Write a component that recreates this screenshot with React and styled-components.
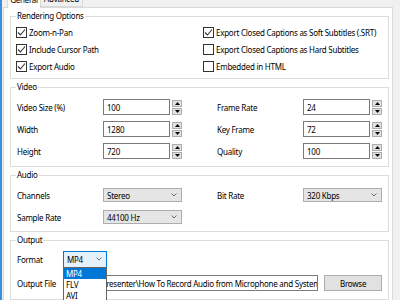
import styled, { createGlobalStyle } from "styled-components";

const GlobalStyle = createGlobalStyle`
  html, body {
    margin: 0;
    padding: 0;
    background: #f0f0f0;
  }
  body {
    font-family: "Noto Sans", "Open Sans", sans-serif;
    font-size: 8px;
    letter-spacing: -0.25px;
    color: #000000;
  }
  * { box-sizing: border-box; }
`;

const Window = styled.div`
  width: 400px;
  height: 300px;
  overflow: hidden;
  border-left: 2px solid #3d8fdc;
  background: #f0f0f0;
  display: flex;
  flex-direction: column;
  padding: 0 7px 0 1px;
`;

const Tabs = styled.div`
  display: flex;
  height: 20px;
  margin-top: -13px;
  padding-left: 4px;
`;

const Tab = styled.div`
  position: relative;
  z-index: 1;
  display: flex;
  justify-content: center;
  padding-top: 2px;
  align-items: center;
  width: ${(p) => p.$w}px;
  height: ${(p) => (p.$active ? 21 : 20)}px;
  background: ${(p) => (p.$active ? "#ffffff" : "#f0f0f0")};
  border: 1px solid #d9d9d9;
  border-bottom: ${(p) => (p.$active ? "none" : "1px solid #d9d9d9")};
  margin-left: ${(p) => (p.$active ? 0 : -1)}px;
`;

const Panel = styled.div`
  flex: 1;
  background: #ffffff;
  border: 1px solid #d9d9d9;
  padding: 8px 3px 0 6px;
  display: flex;
  flex-direction: column;
  gap: 8px;
`;

const Group = styled.section`
  position: relative;
  border: 1px solid #dcdcdc;
  padding: ${(p) => p.$pad};
`;

const Caption = styled.span`
  position: absolute;
  top: -7px;
  left: 5px;
  padding: 0 1px;
  line-height: 12px;
  background: #ffffff;
`;

const CheckGrid = styled.div`
  display: grid;
  grid-template-columns: 187px 1fr;
  grid-auto-rows: 17px;
`;

const CheckRow = styled.label`
  display: flex;
  align-items: center;
  gap: 2px;
  white-space: nowrap;
`;

const Box = styled.span`
  width: 11px;
  height: 11px;
  border: 1px solid #333333;
  background: #ffffff;
  display: flex;
  align-items: center;
  justify-content: center;
`;

const FieldRow = styled.div`
  display: grid;
  grid-template-columns: 165px 165px;
  column-gap: 35px;
  height: 22px;
`;

const Field = styled.div`
  display: flex;
  align-items: center;
`;

const Label = styled.span`
  width: ${(p) => p.$w || 86}px;
  flex-shrink: 0;
  white-space: nowrap;
`;

const TextBox = styled.div`
  width: ${(p) => p.$w || 67}px;
  height: 16px;
  border: 1px solid #7a7a7a;
  background: #ffffff;
  padding-left: 3px;
  display: flex;
  align-items: center;
  overflow: hidden;
  white-space: nowrap;
`;

const Spinner = styled.div`
  margin-left: 2px;
  display: flex;
  flex-direction: column;
  gap: 1px;
`;

const SpinButton = styled.div`
  width: 10px;
  height: 7px;
  background: #e1e1e1;
  border: 1px solid #adadad;
  display: flex;
  align-items: center;
  justify-content: center;
`;

const Select = styled.div`
  position: relative;
  width: ${(p) => p.$w || 79}px;
  height: ${(p) => p.$h || 14}px;
  background: ${(p) => (p.$focus ? "#e5f1fb" : "#e5e5e5")};
  border: 1px solid ${(p) => (p.$focus ? "#0078d7" : "#adadad")};
  display: flex;
  align-items: center;
  justify-content: space-between;
  padding: 0 4px 0 3px;
  white-space: nowrap;
`;

const List = styled.ul`
  position: absolute;
  top: 100%;
  left: -1px;
  width: 44px;
  margin: 0;
  padding: 0 0 4px;
  list-style: none;
  background: #ffffff;
  border: 1px solid #646464;
  z-index: 2;
`;

const Item = styled.li`
  height: 11px;
  line-height: 11px;
  padding-left: 2px;
  background: ${(p) => (p.$selected ? "#0078d7" : "transparent")};
  color: ${(p) => (p.$selected ? "#ffffff" : "#000000")};
`;

const OutRow = styled.div`
  display: flex;
  align-items: center;
  height: 24px;
`;

const Button = styled.button`
  margin-left: 6px;
  width: 58px;
  height: 16px;
  padding: 0;
  font: inherit;
  letter-spacing: inherit;
  color: #000000;
  background: #e1e1e1;
  border: 1px solid #adadad;
`;

function Check({ checked, children }) {
  return (
    <CheckRow>
      <Box>
        {checked && (
          <svg width="9" height="9" viewBox="0 0 9 9">
            <polyline points="1,4.5 3.4,7 8,1.5" fill="none" stroke="#333" strokeWidth="1.1" />
          </svg>
        )}
      </Box>
      {children}
    </CheckRow>
  );
}

function Arrow({ down }) {
  return (
    <svg width="5" height="3" viewBox="0 0 5 3">
      <polygon points={down ? "0,0 5,0 2.5,3" : "0,3 5,3 2.5,0"} fill="#000" />
    </svg>
  );
}

function Number({ label, value }) {
  return (
    <Field>
      <Label>{label}</Label>
      <TextBox>{value}</TextBox>
      <Spinner>
        <SpinButton><Arrow /></SpinButton>
        <SpinButton><Arrow down /></SpinButton>
      </Spinner>
    </Field>
  );
}

function Chevron() {
  return (
    <svg width="6" height="4" viewBox="0 0 6 4">
      <polyline points="0.5,0.5 3,3 5.5,0.5" fill="none" stroke="#606060" strokeWidth="0.9" />
    </svg>
  );
}

function Combo({ label, value }) {
  return (
    <Field>
      <Label>{label}</Label>
      <Select>
        {value}
        <Chevron />
      </Select>
    </Field>
  );
}

export default function App() {
  return (
    <>
      <GlobalStyle />
      <Window>
        <Tabs>
          <Tab $active $w={34}>General</Tab>
          <Tab $w={43}>Advanced</Tab>
        </Tabs>
        <Panel>
          <Group $pad="7px 0 3px 5px">
            <Caption>Rendering Options</Caption>
            <CheckGrid>
              <Check checked>Zoom-n-Pan</Check>
              <Check checked>Export Closed Captions as Soft Subtitles (.SRT)</Check>
              <Check checked>Include Cursor Path</Check>
              <Check>Export Closed Captions as Hard Subtitles</Check>
              <Check checked>Export Audio</Check>
              <Check>Embedded in HTML</Check>
            </CheckGrid>
          </Group>

          <Group $pad="8px 6px 4px">
            <Caption>Video</Caption>
            <FieldRow>
              <Number label="Video Size (%)" value="100" />
              <Number label="Frame Rate" value="24" />
            </FieldRow>
            <FieldRow>
              <Number label="Width" value="1280" />
              <Number label="Key Frame" value="72" />
            </FieldRow>
            <FieldRow>
              <Number label="Height" value="720" />
              <Number label="Quality" value="100" />
            </FieldRow>
          </Group>

          <Group $pad="8px 6px 3px">
            <Caption>Audio</Caption>
            <FieldRow>
              <Combo label="Channels" value="Stereo" />
              <Combo label="Bit Rate" value="320 Kbps" />
            </FieldRow>
            <FieldRow>
              <Combo label="Sample Rate" value="44100 Hz" />
            </FieldRow>
          </Group>

          <Group $pad="6px 6px 4px">
            <Caption>Output</Caption>
            <OutRow>
              <Label $w={46}>Format</Label>
              <Select $focus $w={44} $h={17}>
                MP4
                <Chevron />
                <List>
                  <Item $selected>MP4</Item>
                  <Item>FLV</Item>
                  <Item>AVI</Item>
                </List>
              </Select>
            </OutRow>
            <OutRow>
              <Label $w={46}>Output File</Label>
              <TextBox $w={256}>
                Camtasia Presenter\How To Record Audio from Microphone and System Sound.mp4
              </TextBox>
              <Button>Browse</Button>
            </OutRow>
          </Group>
        </Panel>
      </Window>
    </>
  );
}
